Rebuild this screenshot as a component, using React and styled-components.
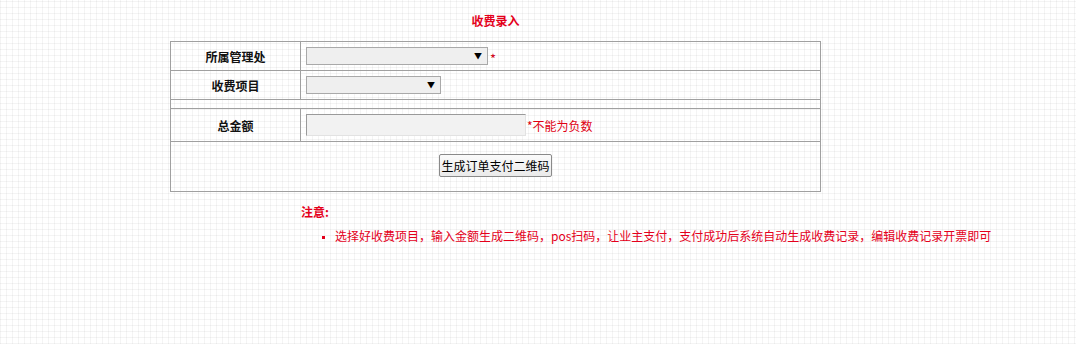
import React from 'react'
import styled, { createGlobalStyle } from 'styled-components'

const GlobalStyle = createGlobalStyle`
  html, body {
    margin: 0;
    padding: 0;
  }
  body {
    font-family: "Noto Sans CJK SC", "Liberation Sans", sans-serif;
    font-size: 12px;
    color: #000;
    background-color: #fff;
    background-image:
      repeating-linear-gradient(90deg, rgba(0,0,0,0.045) 0 1px, transparent 1px 6px),
      repeating-linear-gradient(0deg, rgba(0,0,0,0.045) 0 1px, transparent 1px 6px);
    min-height: 344px;
  }
`;

const Page = styled.div`
  padding: 12px 0 0 170px;
`;

const Title = styled.h2`
  width: 651px;
  margin: 0 0 12px;
  text-align: center;
  font-size: 12px;
  line-height: 17px;
  font-weight: bold;
  color: #e4001b;
`;

const FormGrid = styled.div`
  width: 651px;
  box-sizing: border-box;
  border: 1px solid #a0a0a0;
  display: flex;
  flex-direction: column;
`;

const Row = styled.div`
  display: grid;
  grid-template-columns: 130px 1fr;
  height: ${p => p.$h}px;
  & + & {
    border-top: 1px solid #a0a0a0;
  }
`;

const Label = styled.div`
  border-right: 1px solid #a0a0a0;
  display: flex;
  align-items: center;
  justify-content: center;
  font-weight: bold;
  font-size: 12px;
  color: #111;
`;

const Field = styled.div`
  display: flex;
  align-items: center;
  padding-left: 5px;
`;

const FullCell = styled.div`
  grid-column: 1 / -1;
  display: flex;
  align-items: center;
  justify-content: center;
`;

const SelectWrap = styled.div`
  position: relative;
  width: ${p => p.$w}px;
  height: 18px;
`;

const Select = styled.select`
  appearance: none;
  width: 100%;
  height: 100%;
  box-sizing: border-box;
  margin: 0;
  border: 1px solid #a9a9a9;
  background: #efefef;
  font-family: inherit;
  font-size: 12px;
`;

const Arrow = styled.span`
  position: absolute;
  right: 6px;
  top: 3px;
  font-size: 8px;
  line-height: 12px;
  color: #000;
  pointer-events: none;
`;

const Required = styled.span`
  color: #d0021b;
  font-size: 13px;
  margin-left: 2px;
  margin-top: 4px;
`;

const Hint = styled.span`
  color: #e00012;
  font-size: 12px;
  margin-left: 1px;
`;

const TextInput = styled.input`
  width: 220px;
  height: 22px;
  box-sizing: border-box;
  margin: 0;
  background: #f2f2f2;
  border: 1px solid;
  border-color: #9a9a9a #e2e2e2 #e2e2e2 #9a9a9a;
`;

const Button = styled.button`
  height: 23px;
  padding: 0 1px;
  margin-bottom: 3px;
  font-family: inherit;
  font-size: 12px;
  color: #000;
  background: linear-gradient(#fbfbfb, #eaeaea);
  border: 1px solid #8a8a8a;
  border-radius: 2px;
`;

const Notice = styled.div`
  margin: 12px 0 0 131px;
  color: #e4001b;
`;

const NoticeTitle = styled.div`
  font-weight: bold;
  font-size: 12px;
  line-height: 16px;
`;

const NoticeList = styled.ul`
  margin: 8px 0 0;
  padding-left: 34px;
  list-style: square;
  font-size: 12px;
  line-height: 16px;
  li::marker {
    font-size: 8px;
  }
`;

export default function App() {
  return (
    <>
      <GlobalStyle />
      <Page>
        <Title>收费录入</Title>
        <FormGrid>
          <Row $h={28}>
            <Label>所属管理处</Label>
            <Field>
              <SelectWrap $w={182}>
                <Select><option></option></Select>
                <Arrow>▼</Arrow>
              </SelectWrap>
              <Required>*</Required>
            </Field>
          </Row>
          <Row $h={28}>
            <Label>收费项目</Label>
            <Field>
              <SelectWrap $w={135}>
                <Select><option></option></Select>
                <Arrow>▼</Arrow>
              </SelectWrap>
            </Field>
          </Row>
          <Row $h={8} />
          <Row $h={32}>
            <Label>总金额</Label>
            <Field>
              <TextInput type="text" />
              <Hint>*不能为负数</Hint>
            </Field>
          </Row>
          <Row $h={49}>
            <FullCell>
              <Button>生成订单支付二维码</Button>
            </FullCell>
          </Row>
        </FormGrid>
        <Notice>
          <NoticeTitle>注意:</NoticeTitle>
          <NoticeList>
            <li>选择好收费项目，输入金额生成二维码，pos扫码，让业主支付，支付成功后系统自动生成收费记录，编辑收费记录开票即可</li>
          </NoticeList>
        </Notice>
      </Page>
    </>
  )
}
